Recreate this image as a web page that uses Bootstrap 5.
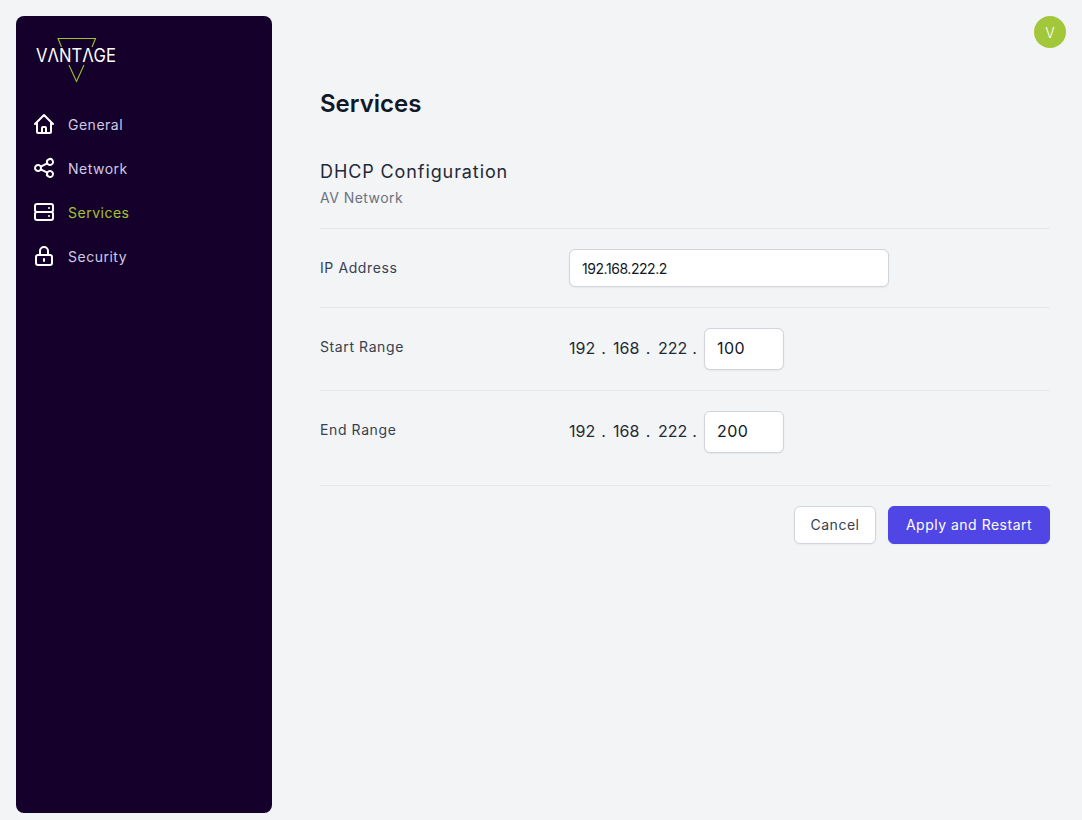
<!DOCTYPE html>
<html lang="en">

<head>
    <meta charset="UTF-8">
    <meta name="viewport" content="width=device-width, initial-scale=1.0">
    <title>Services</title>
    <link href="https://cdn.jsdelivr.net/npm/bootstrap@5.3.0/dist/css/bootstrap.min.css" rel="stylesheet">
    <style>
        html, body { height: 100%; }
        body { background: #f3f4f6; font-family: Inter, "Open Sans", sans-serif; color: #111827; overflow: hidden; }
        .side-wrap { padding: 16px 0 7px 16px; height: 820px; }
        .side-panel { width: 256px; height: 100%; background: #15002b; border-radius: 8px; }
        .logo-box { height: 78px; padding: 22px 0 0 20px; }
        .logo-box svg { display: block; overflow: visible; }
        .logo-word { font-family: Inter, sans-serif; font-weight: 400; font-size: 18px; fill: #fff; }
        .side-menu { padding-top: 8px; }
        .side-link { display: flex; align-items: center; gap: 12px; height: 44px; padding-left: 16px; font-size: 14px; font-weight: 400; letter-spacing: .5px; color: #cfcbe6; text-decoration: none; }
        .side-link svg { width: 24px; height: 24px; flex: none; }
        .side-link.is-active { color: #a2c42e; }
        .avatar-dot { width: 32px; height: 32px; border-radius: 50%; background: #a2c73a; color: #fff; font-size: 14px; font-weight: 300; }
        .top-strip { padding: 16px 16px 0 0; }
        .page-body { padding: 40px 32px 0 48px; }
        .page-title { font-size: 24px; font-weight: 600; line-height: 32px; margin: 0; color: #111827; }
        .sect-head { padding-top: 40px; padding-bottom: 20px; border-bottom: 1px solid #e5e7eb; }
        .sect-title { font-size: 18px; font-weight: 400; letter-spacing: .9px; line-height: 24px; margin: 0; color: #1f2937; }
        .sect-sub { font-size: 14px; letter-spacing: .45px; line-height: 20px; margin: 4px 0 0; color: #6b7280; }
        .form-line { display: flex; border-bottom: 1px solid #e5e7eb; font-size: 14px; }
        .form-line.ip-line { padding: 20px 0; align-items: center; }
        .ip-line .line-label { padding-bottom: 2px; }
        .form-line.range-line { padding: 20px 0 20px; }
        .form-line.last-line { padding-bottom: 32px; }
        .line-label { width: 249px; flex: none; font-weight: 400; letter-spacing: .6px; color: #374151; }
        .range-line .line-label { line-height: 38px; }
        .ip-input.form-control { width: 320px; height: 38px; padding: 0 12px; font-size: 14px; letter-spacing: -.45px; color: #111827; border-color: #d1d5db; border-radius: 6px; box-shadow: 0 1px 2px rgba(0,0,0,.05); }
        .octet { font-size: 16px; color: #1f2937; }
        .octet-row { display: flex; align-items: center; height: 42px; }
        .octet-num { width: 25px; flex: none; margin-top: -2px; }
        .octet-num.wide-num { width: 27px; }
        .octet-sep { width: 19px; flex: none; text-align: center; font-size: 16px; margin-top: -2px; }
        .octet-sep.wide-sep { width: 20px; }
        .octet-input.form-control { width: 80px; height: 42px; padding: 0 12px 2px; font-size: 16px; letter-spacing: .5px; color: #111827; border-color: #d1d5db; border-radius: 6px; box-shadow: 0 1px 2px rgba(0,0,0,.05); }
        .foot-btns { padding-top: 20px; gap: 12px; }
        .foot-btns .btn { height: 38px; font-size: 14px; font-weight: 400; letter-spacing: .5px; border-radius: 6px; padding: 0 0 2px; box-shadow: 0 1px 2px rgba(0,0,0,.05); }
        .btn-cancel { width: 82px; background: #fff; border: 1px solid #d1d5db; color: #374151; }
        .btn-apply { width: 162px; background: #4f46e5; border: 1px solid #4f46e5; color: #fff; }
        .btn-apply:hover { background: #4338ca; color: #fff; }
    </style>
</head>

<body>
    <div class="d-flex">
        <!-- Sidebar -->
        <div class="side-wrap">
            <div class="side-panel">
                <div class="logo-box">
                    <svg width="84" height="46" viewBox="0 0 84 46" aria-label="Vantage">
                        <path d="M25.500 9 22 .5H59.500L56 9M48 27 40.500 43.500 33 27" fill="none" stroke="#9dc12a" stroke-width="1.100"/>
                        <text class="logo-word" x="0" y="24" textLength="80" lengthAdjust="spacingAndGlyphs">VΛNTΛGE</text>
                    </svg>
                </div>
                <nav class="side-menu">
                    <a class="side-link" href="#">
                        <svg viewBox="0 0 24 24" fill="none" stroke="#fff" stroke-width="2" stroke-linecap="round" stroke-linejoin="round"><path d="M3 12l2-2m0 0l7-7 7 7M5 10v10a1 1 0 001 1h3m10-11l2 2m-2-2v10a1 1 0 01-1 1h-3m-6 0a1 1 0 001-1v-4a1 1 0 011-1h2a1 1 0 011 1v4a1 1 0 001 1m-6 0h6"/></svg>
                        General
                    </a>
                    <a class="side-link" href="#">
                        <svg viewBox="0 0 24 24" fill="none" stroke="#fff" stroke-width="2" stroke-linecap="round" stroke-linejoin="round"><path d="M8.684 13.342C8.886 12.938 9 12.482 9 12c0-.482-.114-.938-.316-1.342m0 2.684a3 3 0 110-2.684m0 2.684l6.632 3.316m-6.632-6l6.632-3.316m0 0a3 3 0 105.367-2.684 3 3 0 00-5.367 2.684zm0 9.316a3 3 0 105.368 2.684 3 3 0 00-5.368-2.684z"/></svg>
                        Network
                    </a>
                    <a class="side-link is-active" href="#">
                        <svg viewBox="0 0 24 24" fill="none" stroke="#fff" stroke-width="2" stroke-linecap="round" stroke-linejoin="round"><path d="M5 12h14M5 12a2 2 0 01-2-2V6a2 2 0 012-2h14a2 2 0 012 2v4a2 2 0 01-2 2M5 12a2 2 0 00-2 2v4a2 2 0 002 2h14a2 2 0 002-2v-4a2 2 0 00-2-2m-2-4h.01M17 16h.01"/></svg>
                        Services
                    </a>
                    <a class="side-link" href="#">
                        <svg viewBox="0 0 24 24" fill="none" stroke="#fff" stroke-width="2" stroke-linecap="round" stroke-linejoin="round"><path d="M12 15v2m-6 4h12a2 2 0 002-2v-6a2 2 0 00-2-2H6a2 2 0 00-2 2v6a2 2 0 002 2zm10-10V7a4 4 0 00-8 0v4h8z"/></svg>
                        Security
                    </a>
                </nav>
            </div>
        </div>

        <!-- Main -->
        <div class="flex-grow-1">
            <div class="top-strip d-flex justify-content-end">
                <div class="avatar-dot d-flex align-items-center justify-content-center">V</div>
            </div>
            <div class="page-body">
                <h1 class="page-title">Services</h1>
                <div class="sect-head">
                    <h2 class="sect-title">DHCP Configuration</h2>
                    <p class="sect-sub">AV Network</p>
                </div>
                <div class="form-line ip-line">
                    <div class="line-label">IP Address</div>
                    <input class="form-control ip-input" type="text" value="192.168.222.2">
                </div>
                <div class="form-line range-line">
                    <div class="line-label">Start Range</div>
                    <div class="octet-row octet">
                        <span class="octet-num">192</span><span class="octet-sep">.</span>
                        <span class="octet-num">168</span><span class="octet-sep wide-sep">.</span>
                        <span class="octet-num wide-num">222</span><span class="octet-sep">.</span>
                        <input class="form-control octet-input" type="text" value="100">
                    </div>
                </div>
                <div class="form-line range-line last-line">
                    <div class="line-label">End Range</div>
                    <div class="octet-row octet">
                        <span class="octet-num">192</span><span class="octet-sep">.</span>
                        <span class="octet-num">168</span><span class="octet-sep wide-sep">.</span>
                        <span class="octet-num wide-num">222</span><span class="octet-sep">.</span>
                        <input class="form-control octet-input" type="text" value="200">
                    </div>
                </div>
                <div class="foot-btns d-flex justify-content-end">
                    <button type="button" class="btn btn-cancel">Cancel</button>
                    <button type="button" class="btn btn-apply">Apply and Restart</button>
                </div>
            </div>
        </div>
    </div>

    <script src="https://cdn.jsdelivr.net/npm/bootstrap@5.3.0/dist/js/bootstrap.bundle.min.js"></script>
</body>

</html>
